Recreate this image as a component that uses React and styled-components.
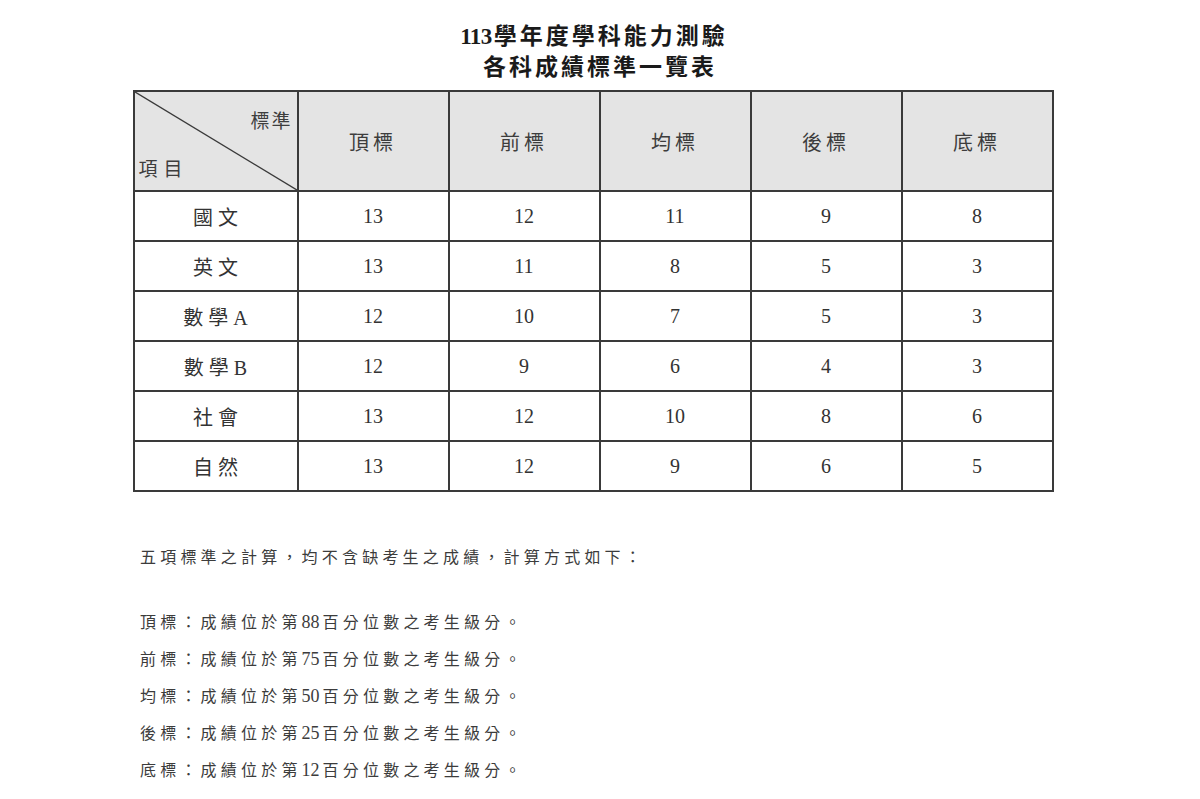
import React from "react";
import styled, { createGlobalStyle } from "styled-components";

const Global = createGlobalStyle`
  html, body { margin: 0; padding: 0; background: #ffffff; }
  body { font-family: "Liberation Serif", "Noto Sans CJK TC", serif; color: #333; }
`;

const Page = styled.div`
  width: 1200px;
  height: 799px;
  display: flex;
  flex-direction: column;
  align-items: center;
  padding-top: 21px;
  box-sizing: border-box;
`;

const Title = styled.h1`
  margin: 0;
  font-family: "Liberation Serif", "Noto Sans CJK TC", serif;
  font-weight: 700;
  font-size: 23px;
  line-height: 31px;
  letter-spacing: 3px;
  color: #1a1a1a;
  text-align: center;
`;

const TitleDigits = styled.span`
  letter-spacing: -0.5px;
  margin-right: 2px;
  margin-left: -12px;
`;

const Table = styled.table`
  margin-top: 7px;
  margin-right: 14px;
  border-collapse: collapse;
  border: 2px solid #3a3a3a;
  table-layout: fixed;
`;

const HeadCell = styled.th`
  position: relative;
  width: ${(p) => p.$w}px;
  height: 98px;
  padding: 0;
  border: 2px solid #3a3a3a;
  background: #e4e4e4;
  font-family: "Liberation Serif", "Noto Sans CJK TC", serif;
  font-weight: 400;
  font-size: 20px;
  letter-spacing: 4px;
  color: #3d3d3d;
  text-align: center;
  vertical-align: middle;
`;

const Diagonal = styled.svg`
  position: absolute;
  inset: 0;
  width: 100%;
  height: 100%;
`;

const CornerLabel = styled.span`
  position: absolute;
  font-size: 19px;
  letter-spacing: ${(p) => p.$ls}px;
  ${(p) => (p.$top ? "top: 14px; right: 4px;" : "bottom: 9px; left: 4px;")}
`;

const Cell = styled.td`
  height: 48px;
  padding: 0;
  border: 2px solid #3a3a3a;
  text-align: center;
  vertical-align: middle;
  font-family: "Liberation Serif", "Noto Sans CJK TC", serif;
  font-size: 20px;
  color: #333;
  letter-spacing: ${(p) => (p.$label ? "5px" : "0")};
  padding-left: ${(p) => (p.$label ? "5px" : "0")};
`;

const Notes = styled.div`
  align-self: flex-start;
  margin-left: 140px;
  margin-top: 54px;
  display: flex;
  flex-direction: column;
  font-family: "Liberation Serif", "Noto Sans CJK TC", serif;
  font-size: 16px;
  letter-spacing: 4.2px;
  color: #3c3c3c;
`;

const Intro = styled.p`
  margin: 0 0 34px 0;
  line-height: 24px;
`;

const Line = styled.p`
  margin: 0;
  line-height: 36px;
`;

const Num = styled.span`
  font-size: 18px;
  letter-spacing: 0;
  margin-right: 3px;
`;

const headers = ["頂標", "前標", "均標", "後標", "底標"];
const rows = [
  ["國文", 13, 12, 11, 9, 8],
  ["英文", 13, 11, 8, 5, 3],
  ["數學A", 12, 10, 7, 5, 3],
  ["數學B", 12, 9, 6, 4, 3],
  ["社會", 13, 12, 10, 8, 6],
  ["自然", 13, 12, 9, 6, 5],
];
const notes = [
  ["頂標", "88"],
  ["前標", "75"],
  ["均標", "50"],
  ["後標", "25"],
  ["底標", "12"],
];

export default function App() {
  return (
    <>
      <Global />
      <Page>
        <Title>
          <TitleDigits>113</TitleDigits>學年度學科能力測驗
          <br />
          各科成績標準一覽表
        </Title>
        <Table>
          <thead>
            <tr>
              <HeadCell $w={162}>
                <Diagonal viewBox="0 0 100 100" preserveAspectRatio="none">
                  <line x1="0" y1="0" x2="100" y2="100" stroke="#3a3a3a" strokeWidth="1.4" vectorEffect="non-scaling-stroke" />
                </Diagonal>
                <CornerLabel $top $ls={2}>標準</CornerLabel>
                <CornerLabel $ls={6}>項目</CornerLabel>
              </HeadCell>
              {headers.map((h) => (
                <HeadCell key={h} $w={149}>{h}</HeadCell>
              ))}
            </tr>
          </thead>
          <tbody>
            {rows.map((r) => (
              <tr key={r[0]}>
                <Cell $label>{r[0]}</Cell>
                {r.slice(1).map((v, i) => (
                  <Cell key={i}>{v}</Cell>
                ))}
              </tr>
            ))}
          </tbody>
        </Table>
        <Notes>
          <Intro>五項標準之計算，均不含缺考生之成績，計算方式如下：</Intro>
          {notes.map(([n, p]) => (
            <Line key={n}>
              {n}：成績位於第<Num>{p}</Num>百分位數之考生級分。
            </Line>
          ))}
        </Notes>
      </Page>
    </>
  );
}
